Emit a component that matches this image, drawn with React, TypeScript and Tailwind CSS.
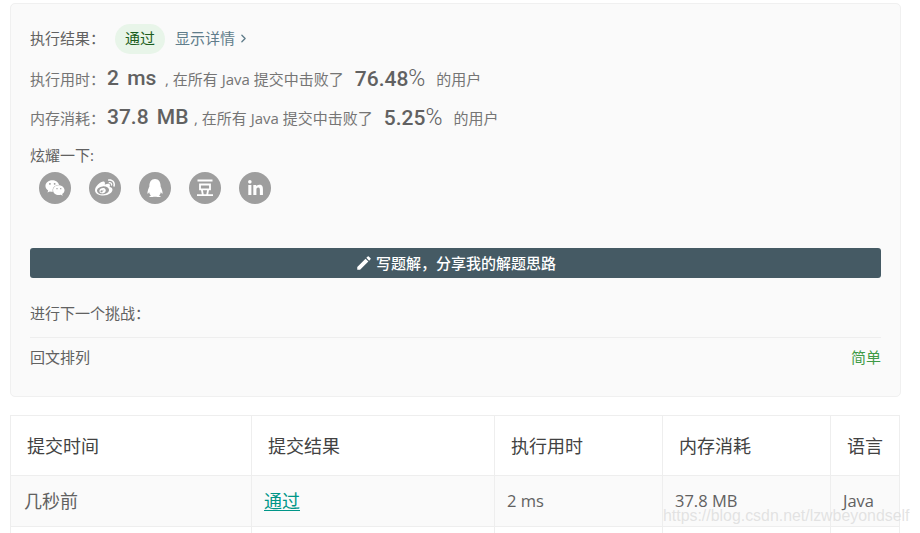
import React from 'react';
import { ChevronRight } from 'lucide-react';
import { FaWeixin, FaWeibo, FaQq, FaLinkedinIn } from 'react-icons/fa';
import { MdEdit } from 'react-icons/md';

const font = "font-['Open_Sans','Noto_Sans_CJK_SC',sans-serif]";

const DoubanIcon = () => (
  <svg width="20" height="20" viewBox="0 0 20 20" fill="none" stroke="white" strokeWidth="1.8">
    <path d="M2.5 2.5h15M5 6.5h10v4.8H5zM6.8 11.5l1 5M13.2 11.5l-1 5M2 17.2h16" />
  </svg>
);

const shares = [
  <FaWeixin size={20} />,
  <FaWeibo size={20} />,
  <FaQq size={18} />,
  <DoubanIcon />,
  <FaLinkedinIn size={17} />,
];

const Stat = ({ label, value, pct, note, gap }: { label: string; value: string; pct: string; note: string; gap: string }) => (
  <div className="flex items-center h-[28px] text-[15px] text-[#757575]">
    <span className="w-[77px] whitespace-nowrap">{label}</span>
    <span className={`text-[21px] font-medium text-[#616161] font-['Roboto',sans-serif] [word-spacing:3px] whitespace-nowrap ${gap}`}>{value}</span>
    <span className="ml-[8px] whitespace-nowrap">{note}</span>
    <span className="ml-[11px] text-[21px] font-medium text-[#616161] font-['Roboto',sans-serif] whitespace-nowrap">
      {pct}
      <span className="font-light text-[23px]">%</span>
    </span>
    <span className="ml-[11px] whitespace-nowrap">的用户</span>
  </div>
);

const cols = 'grid grid-cols-[241px_243px_168px_168px_68px]';

const cells = (items: React.ReactNode[], className: string) =>
  items.map((item, i) => (
    <div key={i} className={`flex items-center whitespace-nowrap ${i < items.length - 1 ? 'border-r border-[#eeeeee]' : ''} ${className}`}>
      {item}
    </div>
  ));

export default function App() {
  return (
    <div className={`relative h-[533px] overflow-hidden bg-white pt-[3px] pl-[10px] pr-[19px] ${font}`}>
      <div className="h-[394px] rounded-[5px] border border-[#f0f0f0] bg-[#fafafa] px-[19px] pt-[19px]">
        <div className="flex items-center h-[31px] text-[15px] text-[#616161]">
          <span className="w-[85px]">执行结果：</span>
          <span className="flex items-center justify-center w-[50px] h-[30px] rounded-full bg-[#e8f5e9] text-[#1b5e20]">通过</span>
          <span className="ml-[10px] text-[#607d8b]">显示详情</span>
          <ChevronRight size={13} strokeWidth={2.5} className="ml-[2px] text-[#607d8b]" />
        </div>
        <div className="mt-[11px]">
          <Stat label="执行用时：" value="2 ms" pct="76.48" note=", 在所有 Java 提交中击败了" gap="w-[50px]" />
        </div>
        <div className="mt-[11px]">
          <Stat label="内存消耗：" value="37.8 MB" pct="5.25" note=", 在所有 Java 提交中击败了" gap="w-[79px]" />
        </div>
        <div className="mt-[13px] h-[20px] leading-[20px] text-[15px] text-[#616161]">炫耀一下:</div>
        <div className="mt-[7px] flex gap-[18px] pl-[9px]">
          {shares.map((icon, i) => (
            <span key={i} className="flex items-center justify-center w-[32px] h-[32px] rounded-full bg-[#9e9e9e] text-white">
              {icon}
            </span>
          ))}
        </div>
        <button className="mt-[44px] flex items-center justify-center gap-[3px] w-[851px] h-[30px] rounded-[3px] bg-[#455a64] text-[15px] font-medium text-white">
          <MdEdit size={18} />
          写题解，分享我的解题思路
        </button>
        <div className="mt-[25px] h-[20px] leading-[20px] text-[15px] text-[#616161]">进行下一个挑战：</div>
        <div className="mt-[14px] w-[851px] border-t border-[#eeeeee] pt-[9px] flex justify-between h-[40px] text-[15px] leading-[20px]">
          <span className="text-[#616161]">回文排列</span>
          <span className="text-[#3f9a46]">简单</span>
        </div>
      </div>

      <div className="mt-[18px] w-[890px] border border-[#eeeeee] border-b-0">
        <div className={`${cols} h-[60px] border-b border-[#eeeeee] text-[18px] text-[#424242]`}>
          {cells(['提交时间', '提交结果', '执行用时', '内存消耗', '语言'], 'pl-[16px] pt-[1px]')}
        </div>
        <div className={`${cols} h-[51px] border-b border-[#eeeeee] bg-[#fafafa] text-[16.5px] text-[#616161]`}>
          {cells(
            [
              <span className="ml-[1px] text-[18px]">几秒前</span>,
              <span className="text-[18px] text-[#009688] underline decoration-1 underline-offset-2">通过</span>,
              '2 ms',
              '37.8 MB',
              'Java',
            ],
            'pl-[12px]',
          )}
        </div>
        <div className={`${cols} h-[20px]`}>{cells(['', '', '', '', ''], '')}</div>
      </div>

      <span className="absolute left-[663px] top-[504px] text-[15.9px] font-['Liberation_Sans',sans-serif] text-[#dcdcdc]/80">
        https://blog.csdn.net/lzwbeyondself
      </span>
    </div>
  );
}
